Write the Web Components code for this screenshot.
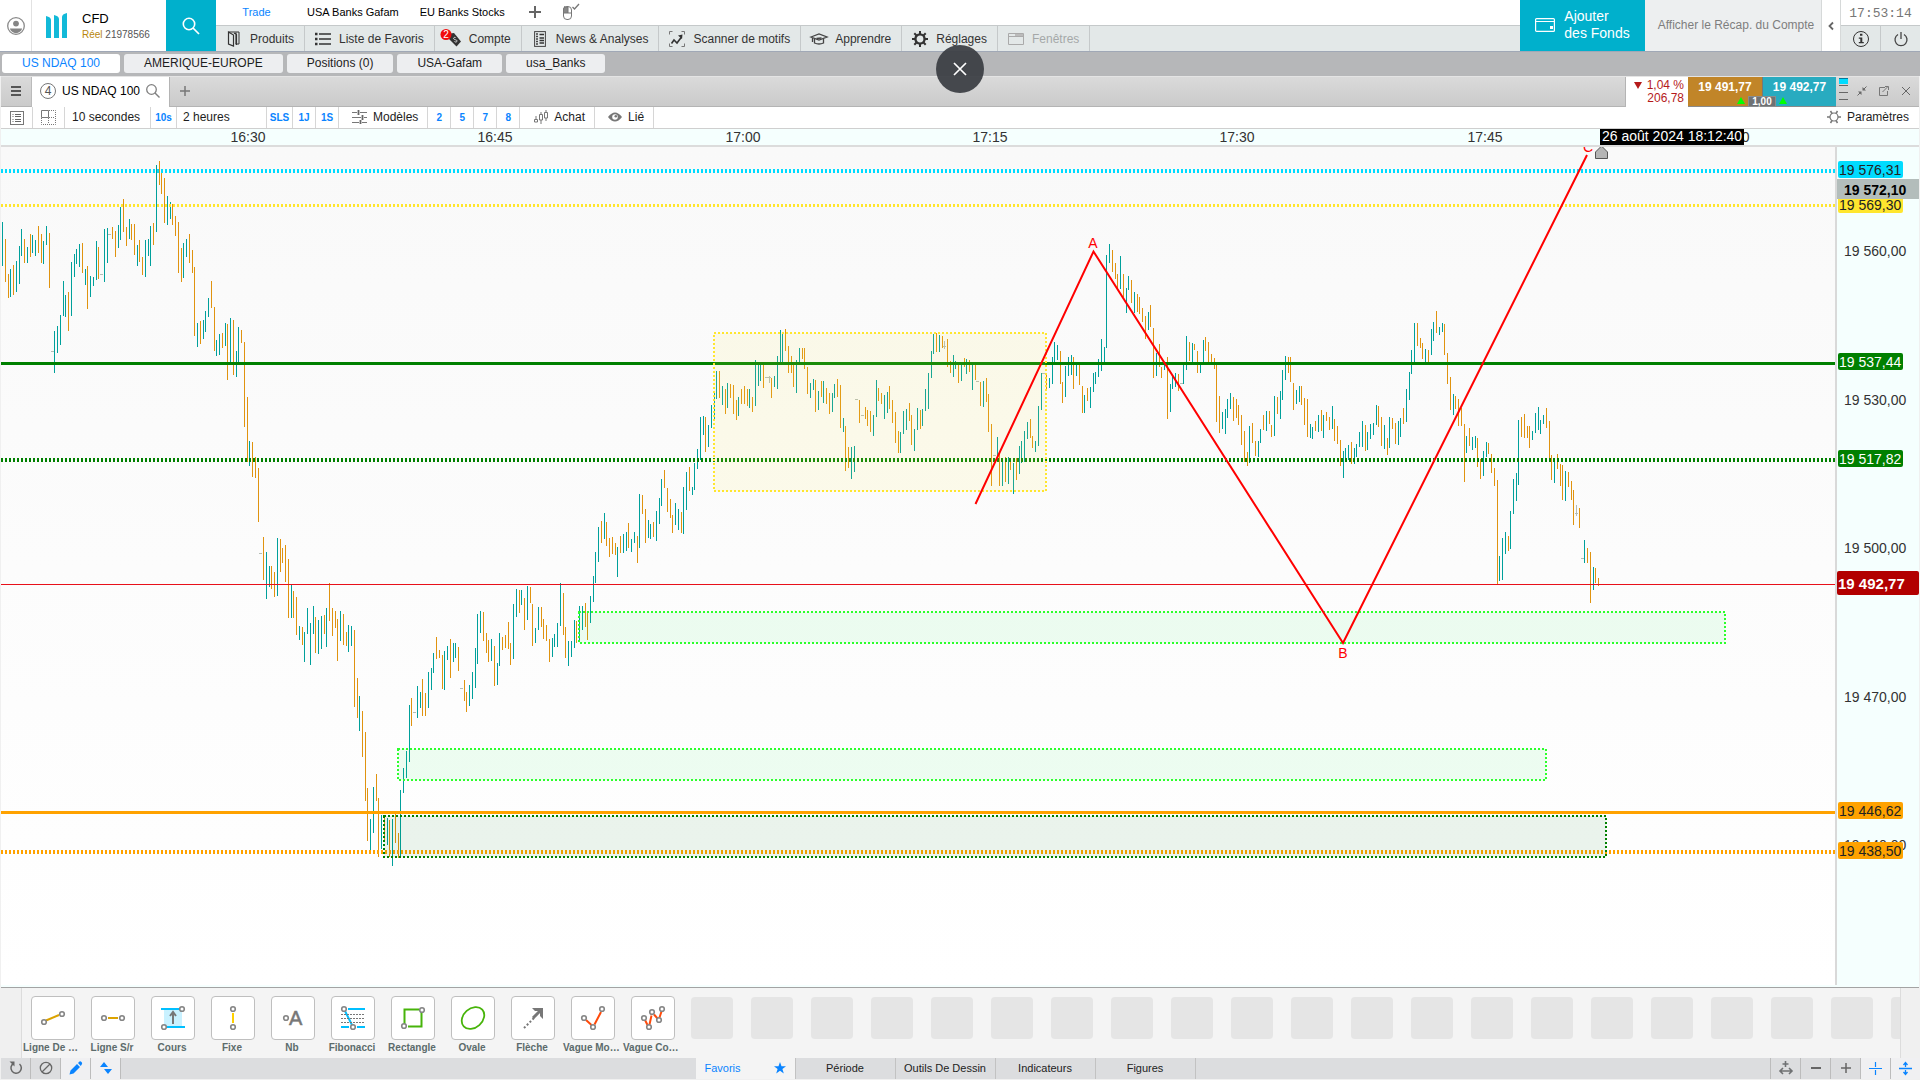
<!DOCTYPE html>
<html lang="fr">
<head>
<meta charset="utf-8">
<title>US NDAQ 100</title>
<style>
	html, body { height: 100%; margin: 0; }
	body {
		background: #f0f0f0;
		color: #1d1d1d;
		font-family: "Liberation Sans", Arial, sans-serif;
		font-size: 12px;
		overflow: hidden;
		--blue: #0a84ff;
		--cyan: #00b0cc;
		--line: #c5c9ca;
	}
</style>
</head>
<body>
<trading-app></trading-app>

<script>
// shared reset for every shadow root
const base = `
	*, *::before, *::after { box-sizing: border-box; }
	:host { display: block; box-sizing: border-box; }
	button {
		font: inherit; color: inherit; background: none; border: 0; margin: 0; padding: 0;
		display: flex; align-items: center; justify-content: center; white-space: nowrap; cursor: pointer;
	}
	a { color: inherit; text-decoration: none; white-space: nowrap; }
`;

function define(tag, css, html) {
	customElements.define(tag, class extends HTMLElement {
		constructor() {
			super();
			this.attachShadow({ mode: "open" });
		}
		connectedCallback() {
			const markup = typeof html == "function" ? html(this) : html;
			this.shadowRoot.innerHTML = `<style>${base}${css}</style>${markup}`;
		}
	});
}

/* ---------- icons ---------- */

const ring = (x, y) => `<circle cx="${x}" cy="${y}" r="2.3" stroke="#858585" stroke-width="1.6"/>`;

// name: [width, height, shapes]
const icons = {
	user: [18, 18, `<circle cx="9" cy="9" r="8.3" stroke="#8a8a8a" stroke-width="1.3"/><circle cx="9" cy="6.6" r="2.9" fill="#858585"/><path d="M2.8 11.6h12.4c-1 2.8-3.2 4.6-6.2 4.6s-5.2-1.8-6.2-4.6z" fill="#858585"/>`],
	logo: [22, 26, `<path d="M0 3q5 1 5 4v18H0zM8 2q5 1 5 4v19H8zM21 0v25h-5V4q0-3 5-4z" fill="#12b9d8"/>`],
	search: [18, 18, `<circle cx="7" cy="7" r="5.7" stroke="currentColor" stroke-width="1.6"/><path d="M11 11l6 6" stroke="currentColor" stroke-width="1.7"/>`],
	find: [14, 14, `<circle cx="5.5" cy="5.5" r="4.8" stroke="#808080" stroke-width="1.3"/><path d="M9 9l4.500 4.500" stroke="#808080" stroke-width="1.400"/>`],
	plus: [12, 12, `<path d="M6 0v12M0 6h12" stroke="currentColor" stroke-width="2"/>`],
	plusSmall: [10, 10, `<path d="M5 0v10M0 5h10" stroke="currentColor" stroke-width="1.5"/>`],
	mouse: [18, 16, `<rect x="1.5" y="2.5" width="8" height="13" rx="3.5" stroke="#777"/><path d="M2 3h4v6H1.5V6Q1.5 3 3 3zM6 9h3" fill="#888" stroke="#777"/><path d="M10.5 3l2 2L17 0" stroke="#777" stroke-width="1.3"/>`],
	book: [16, 16, `<path d="M2.5 1h10.5v12H9.5" stroke="#333"/><path d="M2.5 1l5 3v11l-5-2zM10 1.5V13M8 2l2.5 1.5V14" stroke="#333" stroke-width="1.2"/>`],
	list: [16, 14, `<path d="M4 2h12M4 7h12M4 12h12" stroke="#333" stroke-width="1.7"/><path d="M0 2h2.5M0 7h2.5M0 12h2.5" stroke="#333" stroke-width="2.5"/>`],
	tag: [18, 18, `<path d="M6 3.5l4-.5 7 8.5-4.5 5L5 9z" fill="#333"/><path d="M11.5 7.5c-1-.6-2.5.4-1.7 1.5s3 .5 3.2 1.8-1.5 1.7-2.5.7" stroke="#ddd"/><circle cx="2" cy="4.5" r="5.5" fill="#f10b0b"/><text x="2" y="8" text-anchor="middle" font-size="10" fill="#fff">2</text>`],
	news: [12, 16, `<rect x=".6" y=".6" width="10.8" height="14.8" stroke="#444"/><path d="M2 3h2M2 5.5h2M2 8h2M2 10.5h2M2 13h2" stroke="#444" stroke-width="1.3"/><path d="M5.5 3.5H10M5.5 7H10M5.5 9.5H10M5.5 12H10" stroke="#333" stroke-width="1.5"/>`],
	scanner: [16, 16, `<path d="M.5 3.5v-3h3M12.5.5h3v3M15.5 12.5v3h-3M3.5 15.5h-3v-3" stroke="#777"/><path d="M2.5 12.5L5 9l3 3 4.5-6" stroke="#333" stroke-width="1.6"/><path d="M9 4.5l4.5-1-.5 4.5z" fill="#333"/>`],
	learn: [18, 12, `<path d="M1 4l8-3 8 3-8 3z" stroke="#444" stroke-width="1.3"/><path d="M4.5 6v4q4.500 2 9 0V6M2.5 5v4M6.5 5.5l5-.5" stroke="#444" stroke-width="1.3"/>`],
	gear: [16, 16, `<circle cx="8" cy="8" r="4.6" stroke="#333" stroke-width="2.4"/><path d="M8 0v3M8 13v3M0 8h3M13 8h3M2.300 2.300l2.200 2.200M11.500 11.500l2.200 2.200M13.700 2.300l-2.200 2.200M4.500 11.500l-2.200 2.200" stroke="#333" stroke-width="2"/>`],
	windows: [16, 12, `<path d="M.5.5h15v11H.5zM.5 3.5h15" stroke="#aaa"/><path d="M7 1h8v2H7z" fill="#bbb"/>`],
	wallet: [20, 14, `<rect x=".6" y=".6" width="18.8" height="12.8" rx="1" stroke="#fff" stroke-width="1.2"/><path d="M1 3.5h18" stroke="#fff"/><path d="M15 8h3v3h-3z" fill="#fff"/>`],
	chevron: [6, 8, `<path d="M5 .5L1.5 4 5 7.5" stroke="#666" stroke-width="1.8"/>`],
	info: [18, 18, `<circle cx="9" cy="9" r="7.5" stroke="#333"/><path d="M8 3.8h2.4v2H8zM6.8 7.5h3.5V12h1.5v1.3h-5V12h1.500V8.8H6.8z" fill="#333"/>`],
	power: [14, 16, `<path d="M4 3.5a6 6 0 1 0 6 0" stroke="#444" stroke-width="1.3"/><path d="M7 1v7" stroke="#444" stroke-width="1.3"/>`],
	burger: [10, 10, `<path d="M0 1h10M0 5h10M0 9h10" stroke="#555" stroke-width="2"/>`],
	close: [16, 16, `<path d="M2 2l12 12M14 2L2 14" stroke="#fff" stroke-width="1.7"/>`],
	x: [10, 10, `<path d="M1 1l8 8M9 1L1 9" stroke="#666"/>`],
	popout: [10, 10, `<path d="M6 1.5H.5v8h8V5" stroke="#777"/><path d="M3.5 6l5-5M6 .5h3.5V4" stroke="#777"/>`],
	shrink: [10, 10, `<path d="M9.5.5L6 4M.5 9.5L4 6" stroke="#666"/><path d="M5.5 1v3.5H9zM1 5.5h3.5V9z" fill="#666"/>`],
	ladder: [9, 22, `<path d="M0 .5h9" stroke="#06789a"/><path d="M0 1h9v5H0z" fill="#00dcff"/><path d="M0 7.5h9M0 14.5h9M0 21.5h9" stroke="#666"/>`],
	sheet: [14, 14, `<rect x=".5" y=".5" width="13" height="13" stroke="#777"/><path d="M5 3.5h6M5 5.5h6M5 8.5h6M5 10.5h6M2.5 3.5h1M2.5 5.5h1M2.5 8.5h1M2.5 10.5h1" stroke="#666"/>`],
	cells: [15, 15, `<path d="M.5.5h7v7h-7z" stroke="#777"/><path d="M8 .5h6.5v14H.5V8M7.5 8v6M8 7.5h6" stroke="#777" stroke-dasharray="1 1"/>`],
	models: [15, 14, `<path d="M0 2.5h5M8 2.5h7M0 7.5h9M12 7.5h3M0 12.5h7M10 12.5h5" stroke="#777"/><path d="M6.5 0v5M10.5 5v5M8.5 10v4" stroke="#666" stroke-width="1.8"/>`],
	candles: [15, 14, `<path d="M1.5 9.5h3V12h-3zM3 6v3M6.5 4.5h3V10h-3zM8 2v2M8 10v4M11.5 2.5h3V8h-3zM13 0v2M13 8v3" stroke="#777"/>`],
	eye: [14, 10, `<path d="M0 5q7-9 14 0-7 9-14 0z" fill="#777"/><circle cx="7" cy="5" r="2.8" fill="#fff"/><circle cx="7.8" cy="4.2" r="1.3" fill="#777"/>`],
	cog: [14, 14, `<circle cx="7" cy="7" r="4" stroke="#777" stroke-width="1.2"/><path d="M0 7h3M11 7h3M3.5 1l1.5 2.5M10.5 1L9 3.5M3.5 13L5 10.5M10.5 13L9 10.5" stroke="#777" stroke-width="1.5"/>`],
	reload: [14, 14, `<path d="M4.5 2.5a5.2 5.2 0 1 0 6 .5" stroke="#666" stroke-width="1.5"/><path d="M.5.5h5v5z" fill="#666"/>`],
	ban: [14, 14, `<circle cx="7" cy="7" r="5.7" stroke="#666" stroke-width="1.3"/><path d="M3 11l8-8" stroke="#666" stroke-width="1.3"/>`],
	pencil: [14, 14, `<path d="M.5 13.5l1-4 6.5-6.5 3 3-6.5 6.5zM9 2l1.5-1.5q1-.5 2 .5t.5 2L11.8 5z" fill="#0a84ff"/>`],
	sort: [12, 14, `<path d="M4 1L8 6H0zM8 13l4-5H4z" fill="#0a84ff"/>`],
	star: [12, 12, `<path d="M6 0l1.5 4.3H12L8.4 7 9.8 11.5 6 8.8 2.2 11.5 3.6 7 0 4.3h4.5z" fill="#0a84ff"/>`],
	expand: [14, 14, `<path d="M6.5 0v6M3.5 3h6M1 10h12M4 7l-3 3 3 3M10 7l3 3-3 3" stroke="#6f7173" stroke-width="1.6"/>`],
	minus: [10, 10, `<path d="M0 5h10" stroke="#666" stroke-width="2"/>`],
	cross: [13, 13, `<path d="M6.5 0v5M6.5 8v5M0 6.5h13" stroke="#0a84ff" stroke-width="1.2"/>`],
	split: [13, 13, `<path d="M0 6.5h13M6.5 1v4M6.5 8v4M4.5 3l2-2.5 2 2.5M4.5 10l2 2.5 2-2.5" stroke="#0a84ff" stroke-width="1.3"/>`],

	trend: [42, 42, `<path d="M14 23.5L27 18" stroke="#dca300" stroke-width="2"/>${ring(12, 25)}${ring(30, 17)}`],
	level: [42, 42, `<path d="M16 21h10" stroke="#dca300" stroke-width="2"/>${ring(12, 21)}${ring(30, 21)}`],
	course: [42, 42, `<path d="M12 13h18v16H12z" fill="#c9f1ff"/><path d="M9 12h18M15 30h18" stroke="#00bfff" stroke-width="2"/><path d="M21 27V15M18 19l3-4 3 4" stroke="#777" stroke-width="2"/>${ring(30, 12)}${ring(12, 30)}`],
	fixed: [42, 42, `<path d="M21 16v10" stroke="#ffd000" stroke-width="2"/>${ring(21, 12)}${ring(21, 30)}`],
	note: [42, 42, `${ring(14, 21)}<text x="17" y="28" font-size="20" font-weight="400" fill="#777" stroke="#777" stroke-width=".5">A</text>`],
	fibo: [42, 42, `<path d="M16 12h17M9 30h8M25 30h8M13 14l7 14" stroke="#00bfff" stroke-width="2"/><path d="M9 17.5h24M9 21.5h24M9 25.5h24" stroke="#777" stroke-dasharray="2 1"/>${ring(12, 12)}${ring(21, 30)}`],
	rect: [42, 42, `<path d="M27 12.5H12.5V27M16 29.5h13.5V15" stroke="#47b40a" stroke-width="2"/>${ring(30, 13)}${ring(12, 29)}`],
	oval: [42, 42, `<ellipse cx="21" cy="21" rx="12.5" ry="9.5" transform="rotate(-42 21 21)" stroke="#47b40a" stroke-width="1.8"/>`],
	arrow: [42, 42, `<path d="M12 31l10-10" stroke="#777" stroke-width="2" stroke-dasharray="2 2"/><path d="M21 21l7-7" stroke="#777" stroke-width="3"/><path d="M20 11h11v11l-3-3v-5h-5z" fill="#777"/>`],
	wave: [42, 42, `<path d="M14 23l5.500 5M22.500 27.500L29 15" stroke="#ff4a0a" stroke-width="2"/>${ring(12, 21)}${ring(21, 30)}${ring(30, 12)}`],
	waves: [42, 42, `<path d="M13 23l2.500 5M17.500 27.500l2-9M22 17.500l3.500 4M27.500 20.500l2-6" stroke="#ff4a0a" stroke-width="2"/>${ring(12, 21)}${ring(17, 30)}${ring(20, 15)}${ring(27, 23)}${ring(30, 12)}`]
};

define("ui-icon", `
	:host { display: block; flex: none; }
	svg { display: block; overflow: visible; }
`, el => {
	const [w, h, shapes] = icons[el.getAttribute("name")];
	return `<svg width="${w}" height="${h}" viewBox="0 0 ${w} ${h}" fill="none" aria-hidden="true">${shapes}</svg>`;
});

/* ---------- top bar ---------- */

define("nav-item", `
	:host { border-right: 1px solid var(--line); color: #333; }
	:host([disabled]) { color: #a5a8a8; }
	button { height: 100%; padding: 0 10px 0 9px; gap: 7px; }
	.glyph { width: 18px; display: flex; justify-content: center; }
`, el => `
	<button ${el.hasAttribute("disabled") ? "disabled" : ""}>
		<span class="glyph"><ui-icon name="${el.getAttribute("icon")}"></ui-icon></span><slot></slot>
	</button>
`);

define("top-bar", `
	:host { display: flex; height: 51px; background: #fff; flex: none; }
	.user { width: 32px; border-right: 1px solid #e2e2e2; }
	.account { width: 134px; padding-left: 14px; display: flex; align-items: center; gap: 14px; }
	.account b { display: block; font-weight: normal; font-size: 13px; line-height: 16px; padding-top: 1px; color: #000; }
	.account small { display: block; font-size: 10px; line-height: 15px; color: #555; }
	.account small span { color: #b8860b; }
	.search { width: 50px; background: var(--cyan); color: #fff; }
	.middle { flex: 1; min-width: 0; display: flex; flex-direction: column; }
	.views { height: 25px; display: flex; align-items: center; font-size: 11px; color: #000; padding-bottom: 2px; }
	.views a { padding: 0 10px; text-align: center; }
	.views a.on { width: 81px; color: var(--blue); }
	.views a:last-of-type { margin: 0 2px 0 1px; }
	.views button { color: #666; width: 36px; }
	nav { height: 26px; display: flex; background: #e3e8e8; border-top: 1px solid var(--line); }
	.funds { width: 125px; padding-bottom: 1px; background: var(--cyan); color: #fff; font-size: 14px; line-height: 17px; gap: 9px; text-align: left; }
	.recap { width: 176px; padding: 0 0 2px 6px; background: #edeff0; color: #7e7e7e; }
	.fold { width: 20px; border: 1px solid #d6d9d9; border-width: 0 1px; }
	.system { width: 79px; display: flex; flex-direction: column; }
	time { height: 25px; line-height: 27px; text-align: center; font-family: "Liberation Mono", monospace; font-size: 13px; color: #777; }
	.system div { display: flex; flex: 1; background: #e3e8e8; border-top: 1px solid var(--line); }
	.system button { flex: 1; }
	.system button + button { border-left: 1px solid var(--line); }
`, `
	<button class="user" aria-label="Profil"><ui-icon name="user"></ui-icon></button>
	<div class="account">
		<ui-icon name="logo"></ui-icon>
		<div><b>CFD</b><small><span>Réel</span> 21978566</small></div>
	</div>
	<button class="search" aria-label="Rechercher"><ui-icon name="search"></ui-icon></button>
	<div class="middle">
		<div class="views">
			<a class="on" href="#">Trade</a><a href="#">USA Banks Gafam</a><a href="#">EU Banks Stocks</a>
			<button aria-label="Ajouter"><ui-icon name="plus"></ui-icon></button>
			<button aria-label="Souris"><ui-icon name="mouse"></ui-icon></button>
		</div>
		<nav>
			<nav-item icon="book">Produits</nav-item>
			<nav-item icon="list">Liste de Favoris</nav-item>
			<nav-item icon="tag">Compte</nav-item>
			<nav-item icon="news">News &amp; Analyses</nav-item>
			<nav-item icon="scanner">Scanner de motifs</nav-item>
			<nav-item icon="learn">Apprendre</nav-item>
			<nav-item icon="gear">Réglages</nav-item>
			<nav-item icon="windows" disabled>Fenêtres</nav-item>
		</nav>
	</div>
	<button class="funds"><ui-icon name="wallet"></ui-icon><span>Ajouter<br>des Fonds</span></button>
	<button class="recap">Afficher le Récap. du Compte</button>
	<button class="fold" aria-label="Replier"><ui-icon name="chevron"></ui-icon></button>
	<div class="system">
		<time>17:53:14</time>
		<div>
			<button aria-label="Info"><ui-icon name="info"></ui-icon></button>
			<button aria-label="Quitter"><ui-icon name="power"></ui-icon></button>
		</div>
	</div>
`);

define("workspace-tabs", `
	:host { display: flex; gap: 4px; height: 25px; flex: none; padding: 2px 2px 3px; background: #b6b7b9; border-top: 1px solid #a0a8b6; }
	button { height: 19px; padding: 0 20px 2px; border-radius: 3px; background: #edeef0; color: #1d1d1d; }
	button.on { background: #fff; color: var(--blue); }
`, `
	<button class="on">US NDAQ 100</button>
	<button>AMERIQUE-EUROPE</button>
	<button>Positions (0)</button>
	<button>USA-Gafam</button>
	<button>usa_Banks</button>
`);

/* ---------- instrument panel ---------- */

define("panel-header", `
	:host {
		display: flex; height: 31px; flex: none; margin: 0 1px;
		background: linear-gradient(#dadada, #cacaca); border-top: 1px solid #e4e4e4;
	}
	.menu { width: 31px; padding-bottom: 1px; border-right: 1px solid #bbb; border-bottom: 1px solid #b4b4b4; }
	.tab { display: flex; align-items: center; gap: 6px; width: 137px; padding: 0 0 2px 8px; background: #fff; color: #000; white-space: nowrap; }
	.tab i { width: 16px; height: 16px; border: 1px solid #777; border-radius: 50%; font-style: normal; line-height: 14px; text-align: center; color: #555; }
	.rest { flex: 1; display: flex; border: 1px solid #b4b4b4; border-width: 0 1px 1px; }
	.rest button { width: 30px; padding-bottom: 1px; color: #777; }
	.change { width: 62px; background: #fff; color: #b51a1a; text-align: right; line-height: 13px; padding: 2px 4px 0 0; }
	.change i { display: inline-block; border: 4px solid transparent; border-top: 7px solid #b51a1a; border-bottom: 0; margin-right: 5px; }
	.quote { position: relative; display: flex; color: #fff; font-weight: bold; }
	.quote > button { width: 74px; padding-bottom: 10px; border-bottom: 1px solid #8a8a8a; background: #c18528; }
	.quote > button + button { background: #28abc0; border-left: 1px solid #777; }
	.lot { position: absolute; left: 50%; bottom: 0; width: 28px; margin-left: -14px; background: #6f7274; border: 1px solid #8a8c8e; font-size: 10px; line-height: 9px; text-align: center; }
	.lot::before, .lot::after { content: ""; position: absolute; top: 0; border: 4px solid transparent; border-bottom: 7px solid #0f0; border-top: 0; }
	.lot::before { right: 30px; }
	.lot::after { left: 30px; }
	.tools { display: flex; align-items: center; gap: 12px; width: 83px; padding: 0 0 2px 3px; border-bottom: 1px solid #b4b4b4; }
	.tools > ui-icon { margin: 0 -3px 4px 0; }
`, `
	<button class="menu" aria-label="Menu"><ui-icon name="burger"></ui-icon></button>
	<div class="tab"><i>4</i>US NDAQ 100<ui-icon name="find"></ui-icon></div>
	<div class="rest"><button aria-label="Nouvel onglet"><ui-icon name="plusSmall"></ui-icon></button></div>
	<div class="change"><i></i>1,04 %<br>206,78</div>
	<div class="quote">
		<button>19 491,77</button><button>19 492,77</button>
		<span class="lot">1,00</span>
	</div>
	<div class="tools">
		<ui-icon name="ladder"></ui-icon>
		<button aria-label="Réduire"><ui-icon name="shrink"></ui-icon></button>
		<button aria-label="Détacher"><ui-icon name="popout"></ui-icon></button>
		<button aria-label="Fermer"><ui-icon name="x"></ui-icon></button>
	</div>
`);

define("chart-toolbar", `
	:host { display: flex; height: 22px; flex: none; margin: 0 1px; background: #fff; border-bottom: 1px solid #cfcfcf; }
	button { border-right: 1px solid #d6d6d6; gap: 6px; min-width: 23px; padding-bottom: 1px; }
	.icon { width: 32px; padding: 0; }
	.text { justify-content: flex-start; padding-left: 7px; width: 86px; }
	.key + .text { width: 90px; padding-left: 6px; }
	.key { color: var(--blue); font-weight: bold; font-size: 10px; padding-top: 1px; }
	.wide { width: 26px; }
	.group { padding-left: 13px; padding-right: 9px; }
	.params { margin-left: auto; border: 0; padding-right: 10px; }
`, `
	<button class="icon" aria-label="Liste"><ui-icon name="sheet"></ui-icon></button>
	<button class="icon" aria-label="Grille"><ui-icon name="cells"></ui-icon></button>
	<button class="text">10 secondes</button>
	<button class="key wide">10s</button>
	<button class="text">2 heures</button>
	<button class="key wide">SLS</button>
	<button class="key">1J</button>
	<button class="key">1S</button>
	<button class="group"><ui-icon name="models"></ui-icon>Modèles</button>
	<button class="key">2</button>
	<button class="key">5</button>
	<button class="key">7</button>
	<button class="key">8</button>
	<button class="group"><ui-icon name="candles"></ui-icon>Achat</button>
	<button class="group"><ui-icon name="eye"></ui-icon>Lié</button>
	<button class="params"><ui-icon name="cog"></ui-icon>Paramètres</button>
`);

/* ---------- chart ---------- */

// 10 second bars, in blocks: u = up, d = down, n = unchanged.
// Each entry is "x top bottom", scaled by kx and 3 from the block's origin.
const blocks = [
	{ left: -1, top: -7, kx: 3, bars: `u7 246 378;d16 297 426;d25 402 474;u31 387 471;d40 375 465;u49 363 456;u58 318 432;u64 267 348;d73 297 369;u82 321 369;d91 282 351;u97 285 339;u106 300 348;d115 258 339;d124 282 369;u130 303 372;u139 258 315;d148 279 444;n157 634;u163 573 699;u172 558 639;u181 525 615;u190 423 528;u196 465 531;d205 456 573;u214 366 528;u223 342 411;u229 327 372;u238 312 381;d247 309 399;u256 387 435;d262 378 507;u271 408 471;u280 411 438;u289 303 420;d295 321 417;n304 403;u313 267 426;u322 264 369;n328 283;d337 261 297;d346 273 351;u355 255 324;u361 201 300;d370 177 276;d379 261 318;u388 237 297;d394 252 300;d403 252 345;u412 315 378;d418 300 366;d427 351 405;u436 300 411;u445 297 348;u451 258 378;d460 249 315;u469 75 276;d478 63 135;d484 98 162;d493 114 249;u502 168 255;u511 186 237;d517 192 255;d526 228 288;d535 246 399;d544 324 426;u550 309 414;u559 297 351;d568 282 369;d577 330 399;d583 381 588;u592 549 621;d601 543 612;u610 540 597;u616 513 576;u625 474 531;d634 423 504;d643 501 633;u649 600 648;u658 582 645;d667 579 624;u676 549 618;d682 552 720;u691 534 666;d700 540 705;u709 633 711;u715 561 669;d724 570 609;d733 606 861;d742 771 966;u748 903 978;d757 906 1011;d766 951 1014;d775 984 1146` },
	{ left: 219, top: 353, kx: 3, bars: `n121 160;d130 111 240;u139 156 297;u148 198 261;d154 198 267;d163 216 291;u172 114 288;d181 117 216;d187 144 189;d196 135 246;d205 177 354;u214 252 354;d220 273 354;d229 291 405;u238 378 420;d247 381 435;u253 396 486;u262 324 402;u271 369 495;u280 318 402;d286 351 459;u295 360 462;u304 348 447;d313 345 402;u319 324 441;d328 249 363;d337 324 408;d346 333 384;d352 357 483;u361 333 423;d370 342 435;d379 396 438;u385 375 456;u394 378 438;d403 390 621;d412 534 654;u418 588 693;d427 633 771;d436 696 903;d442 864 1023;u451 957 1053;u460 861 999;d469 822 903;d475 894 1071;u484 945 1047;d493 945 1023;u502 954 1035;d508 960 1071;u517 957 1098;d526 939 1029;d535 999 1074;u541 870 1074;u550 804 879;u559 753 834;u568 615 786;d574 594 678;n583 637;u592 558 654;u601 576 624;d607 537 648;d616 579 648;u625 516 624;u634 504 570;u640 459 519;d649 411 477;d658 450 474;d667 465 567;u673 453 570;u682 438 480;d691 417 534;u700 429 486;u706 429 474;d715 441 513;n724 565;d733 540 603;d739 576 636;u748 555 618;u757 516 597;u766 444 564;u772 342 492;u781 333 399;d790 336 423;d799 399 459;d805 420 486;u814 417 483;d823 438 558;u832 489 555;u838 399 498;d847 411 450;d856 405 444;d865 366 447;d871 429 495;u880 312 477;u889 267 351;d898 270 339;u904 270 315;d913 294 390;u922 258 360;d931 261 309;d937 312 438;u946 384 429;u955 321 390;d964 321 381;d970 357 417;d979 375 423;d988 417 486;u997 414 471;u1003 402 441;u1012 369 441;u1021 249 378;d1030 279 405;d1036 381 474;u1045 423 498;u1054 423 471;u1063 360 444;d1069 363 429;u1078 318 423;u1087 318 390;d1096 309 381;d1102 336 420;u1111 288 369;u1120 228 306;u1126 156 249;u1135 81 186;d1144 63 129;u1153 39 117;d1159 66 138;d1168 114 171;d1177 111 162;d1186 129 165;u1192 141 231;d1201 108 159;u1210 102 159;u1219 96 153;d1225 69 144;u1234 117 156;u1243 96 129;d1252 108 189` },
	{ left: 539, top: 153, kx: 2.904, bars: `u288 582 744;d297 585 642;d306 627 729;u315 660 714;u320 672 717;d329 666 711;u338 633 723;u347 594 672;u352 537 618;d361 510 564;d370 564 636;d378 597 654;d384 645 699;u393 609 675;u402 627 690;d410 636 699;u416 561 702;u425 516 630;d434 501 573;u442 561 585;u448 489 570;u457 447 507;u466 351 480;u474 348 405;d480 351 456;u489 375 441;u498 315 384;u506 279 357;u512 213 297;d521 213 294;u529 258 315;d538 267 342;u544 249 324;d553 252 294;d561 255 342;d570 300 360;u576 291 348;d585 267 312;d593 258 312;d602 267 318;u608 267 324;d617 291 336;u625 180 318;u634 195 258;u640 195 243;d649 195 264;n658 232;n666 232 228 249;d672 234 294;u680 228 261;u689 168 267;u698 90 192;u704 102 186;d712 87 153;d721 138 219;d730 168 219;d736 192 261;u744 180 279;u753 144 186;d762 144 177;d768 144 207;d776 201 282;u785 249 294;u794 237 270;d800 240 336;u808 273 330;d817 243 291;u823 243 309;d831 264 312;d840 279 342;u849 279 336;u855 252 294;d863 237 291;d872 255 384;u881 354 396;d887 378 513;d895 441 504;u904 441 537;u913 438 516;n918 298;d927 300 369;n936 346;d945 321 357;d951 330 378;d959 333 396;u968 345 408;u977 240 351;d982 264 303;d991 279 312;u1000 285 357;u1009 276 339;d1014 258 327;d1023 300 369;d1032 336 429;d1041 393 459;u1046 396 459;u1055 333 402;u1064 327 390;d1072 309 363;d1078 345 435;u1087 387 453;u1096 324 390;d1104 330 387;u1110 327 378;u1119 267 333;u1128 219 327;u1136 153 234;u1142 102 162;d1151 99 156;u1160 105 156;d1168 108 144;n1174 139 123 147;d1183 117 201;d1192 183 219;u1200 165 231;u1206 183 207;d1215 195 249;u1223 195 243;d1232 174 201;u1238 177 222;d1247 180 216;u1255 195 270;d1264 195 240;n1270 244;d1279 246 318;u1287 243 321;d1296 234 306;d1302 282 396;d1311 372 558;n1320 466;u1328 411 471;d1334 456 558;u1343 480 558;d1351 471 546;u1360 471 552;d1366 474 510;u1374 489 582;d1383 474 540;u1392 438 522;u1398 423 489;u1406 393 486;u1415 366 417;d1424 357 414;d1430 408 444;u1438 423 456;u1447 318 438;u1456 219 330;n1462 220;d1470 219 267` },
	{ left: 959, top: 73, kx: 3, bars: `u268 474 504;u277 411 492;u283 366 433;u292 375 420;d301 393 492;d307 486 549;u316 438 531;u325 411 468;u334 405 465;d340 411 507;u349 432 468;d358 432 495;d367 498 579;u373 525 579;d382 504 543;u391 501 564;u400 459 516;u406 456 492;u415 417 471;u424 357 453;u433 381 432;u439 105 384;u448 72 129;d457 90 156;d466 129 177;d472 162 204;u481 108 207;d490 162 231;u499 204 279;u505 168 210;d514 180 249;u523 216 279;d532 222 276;d538 231 282;d547 264 306;d556 288 357;u565 276 330;d571 255 321;d580 324 474;u589 399 468;d598 372 441;d604 441 474;u613 432 450;d622 411 597;u631 492 576;u637 465 507;u646 459 501;d655 462 513;n664 490;u670 432 492;u679 348 450;d688 366 423;u697 369 432;d703 372 390;d712 393 459;u721 432 459;u730 360 432;d736 351 393;d745 366 426;d754 402 432;d763 414 447;d769 432 606;d778 528 639;u787 576 627;u796 567 642;u802 537 594;u811 519 567;d820 531 603;d829 537 594;d835 555 615;d844 585 675;d853 633 726;d862 696 738;u868 618 729;d877 609 669;d886 663 708;u895 663 711;u901 627 669;d910 585 630;u919 573 633;d928 573 612;d934 615 651;u943 528 648;d952 531 582;u961 513 597;u967 450 540;u976 408 480;d985 411 459;d991 411 486;d1000 489 570;u1009 510 552;u1018 498 546;d1024 498 555;d1033 534 615;d1042 537 651;u1051 612 654;u1057 621 657;d1066 603 633;u1075 585 636;d1084 570 633;u1090 585 654;d1099 576 603;d1108 591 630;u1117 558 627;d1123 597 663;d1132 618 672;d1141 660 738;u1150 693 774;u1156 684 726;u1165 675 720;d1174 666 732;u1183 684 732;u1189 672 711;u1198 636 681;u1207 603 681;d1216 615 693;u1222 636 690;u1231 612 657;u1240 609 645;u1249 555 615;d1255 558 621;d1264 591 678;u1273 615 687;d1282 654 705;u1288 591 684;d1297 594 627;d1306 609 672;u1315 603 675;u1321 594 651;d1330 564 612;u1339 507 606;u1348 456 540;u1354 390 462;u1363 309 426;d1372 309 378;d1381 354 384;d1387 369 417;u1396 387 426;d1405 390 426;u1414 327 405;u1420 306 363;d1429 273 339` },
	{ left: 1299, top: 133, kx: 2.529, bars: `u353 141 165;u361 129 156;d365 132 225;d373 219 312;d380 291 390;u388 342 405;d393 348 387;d401 357 438;d408 384 438;d416 432 606;u421 468 519;d428 444 498;u436 471 510;u444 468 504;d449 474 561;d456 537 597;u464 513 588;u471 486 531;d477 489 522;d484 522 579;d492 564 618;d499 600 912;u504 828 903;u512 774 900;u519 756 822;d527 768 813;u532 693 807;u540 597 702;u547 579 663;u552 420 615;d560 411 471;d568 402 474;d575 438 474;d580 438 504;u588 453 480;u595 399 459;u603 381 450;u608 420 462;u616 405 432;d623 384 444;d631 423 540;d636 525 600;u643 534 609;d651 522 567;d659 552 618;d664 555 660;u671 573 663;d679 576 621;d687 603 660;d691 630 735;n699 700 675 708;d707 684 744;n715 835;u719 780 849;d727 804 849;d734 816 969;u742 861 930;d747 864 909;d755 894 918` }
];

const barColors = { u: "#00a09b", d: "#e0930f", n: "#b5bdb5" };

function drawBars() {
	const paths = { u: "", d: "", n: "" };
	for (const block of blocks) {
		for (const entry of block.bars.split(";")) {
			const kind = entry[0];
			const [bx, a, b, c] = entry.slice(1).split(" ").map(Number);
			const x = block.left + Math.floor(bx / block.kx);
			const y = v => block.top + Math.round(v / 3);
			if (kind == "n") {
				paths.n += `M${x - 1} ${y(a - 1)}h3v1h-3z`;
				if (c) paths.n += `M${x} ${y(b)}h1V${y(c)}h-1z`;
			} else {
				paths[kind] += `M${x} ${y(a)}h1V${y(b)}h-1z`;
			}
		}
	}
	return Object.keys(paths).map(k => `<path d="${paths[k]}" fill="${barColors[k]}" shape-rendering="crispEdges"/>`).join("");
}

const level = (y, color, width, dotted) =>
	`<line x1="0" x2="100%" y1="${y}" y2="${y}" stroke="${color}" stroke-width="${width}" ${dotted ? 'stroke-dasharray="2 2"' : ""}/>`;

const zone = (x, y, right, bottom, color, fill) =>
	`<rect x="${x + 1}" y="${y + 1}" width="${right - x - 2}" height="${bottom - y - 2}" fill="${fill}" stroke="${color}" stroke-width="2" stroke-dasharray="2 2"/>`;

const times = ["16:30", "16:45", "17:00", "17:15", "17:30", "17:45", "18:00"];

// [price, middle of the label, class]
const prices = [
	["19 560,00", 104, ""], ["19 530,00", 253, ""], ["19 500,00", 401, ""], ["19 470,00", 550, ""], ["19 440,00", 698, ""],
	["19 576,31", 22, "tag cyan"], ["19 569,30", 57, "tag yellow"], ["19 537,44", 214, "tag green"], ["19 517,82", 311, "tag green"],
	["19 446,62", 663, "tag orange"], ["19 438,50", 703, "tag orange"],
	["19 572,10", 42, "cursor"], ["19 492,77", 436, "last"]
];

define("price-chart", `
	:host {
		flex: 1; min-height: 0; margin: 0 1px; padding-bottom: 2px; background: #f5fffe;
		display: grid; grid-template: 18px minmax(0, 1fr) / minmax(0, 1fr) 84px; font-size: 14px;
	}
	svg { display: block; width: 100%; height: 100%; }
	.times { grid-column: 1 / 3; position: relative; border-bottom: 2px solid #dcdcdc; }
	.times svg { fill: #333; }
	.date { position: absolute; left: 1599px; top: 0; height: 16px; line-height: 15px; padding: 0 2px; background: #000; color: #fff; white-space: nowrap; }
	.plot { background: linear-gradient(#f9f9f9, #fff); min-height: 0; }
	.scale { position: relative; border-left: 2px solid #d9d9d9; overflow: hidden; }
	.scale span { position: absolute; left: 7px; height: 18px; margin-top: -9px; line-height: 18px; color: #333; white-space: nowrap; }
	.scale .tag { left: 1px; width: 65px; height: 17px; margin-top: -8px; padding-left: 1px; line-height: 19px; border-radius: 2px; color: #222; }
	.scale .cyan { background: #00dcff; }
	.scale .yellow { background: #ffe62e; }
	.scale .orange { background: #ffa200; }
	.scale .green { background: #008000; color: #fff; }
	.scale .cursor { left: 0; right: 0; height: 20px; margin-top: -10px; line-height: 22px; padding-left: 7px; background: #b3bdbb; color: #000; font-weight: bold; }
	.scale .last { left: 0; right: 0; height: 24px; margin-top: -12px; line-height: 25px; padding-left: 1px; border-radius: 2px; background: #b20000; color: #fff; font-size: 15px; font-weight: bold; }
`, `
	<div class="times">
		<svg>${times.map((t, i) => `<text x="${Math.round(247 + i * 247.3)}" y="13" text-anchor="middle">${t}</text>`).join("")}</svg>
		<span class="date">26 août 2024 18:12:40</span>
	</div>
	<div class="plot">
		<svg fill="none">
			${drawBars()}
			${level(24, "#00dcff", 4, true)}
			${level(58.5, "#ffe62e", 3, true)}
			${level(216.5, "#008000", 3)}
			${level(313, "#008000", 4, true)}
			${level(437.5, "#e8101a", 1)}
			${level(665.5, "#ffa200", 3)}
			${level(705, "#ffa200", 4, true)}
			${zone(712, 185, 1046, 345, "#ffe62e", "rgba(255,240,80,.1)")}
			${zone(577, 464, 1725, 497, "#2cff2c", "rgba(44,240,90,.08)")}
			${zone(396, 601, 1546, 634, "#2cff2c", "rgba(44,240,90,.08)")}
			${zone(382, 668, 1606, 711, "#008000", "rgba(0,110,20,.08)")}
			<polyline points="974.5,357 1092.5,104.5 1342,496 1586,8" stroke="#f00" stroke-width="2"/>
			<g fill="#f00" text-anchor="middle">
				<text x="1092" y="101">A</text><text x="1342" y="511">B</text><text x="1587" y="5">C</text>
			</g>
			<path d="M1600.5-1l6 6v6.5h-12V5z" fill="#b5b5b5" stroke="#555"/>
		</svg>
	</div>
	<div class="scale">${prices.map(([text, y, cls]) => `<span class="${cls}" style="top:${y}px">${text}</span>`).join("")}</div>
`);

/* ---------- drawing tools ---------- */

define("draw-tool", `
	:host { width: 60px; flex: none; }
	button { flex-direction: column; width: 100%; gap: 2px; font-size: 10px; line-height: 12px; font-weight: bold; color: #5c6b6b; }
	i { display: block; width: 44px; height: 44px; border: 1px solid #bfbfbf; border-radius: 4px; background: #fff; font-style: normal; }
	span { padding-right: 2px; }
	:host([cut]) span { align-self: flex-start; }
	:host([empty]) i { width: 42px; height: 42px; border: 0; margin: 1px 8px; background: #e5e5e5; }
`, el => el.hasAttribute("empty")
	? `<i></i>`
	: `<button><i><ui-icon name="${el.getAttribute("icon")}"></ui-icon></i><span><slot></slot></span></button>`);

define("draw-tray", `
	:host { display: flex; height: 71px; flex: none; margin: 0 1px; background: #f0f0f0; border-top: 1px solid #a3a3a3; }
	.row { flex: 1; display: flex; overflow: hidden; min-width: 0; margin: 0 18px 0 20px; padding: 8px 0 0 1px; background: #f4f4f4; border: 1px solid #dcdcdc; border-width: 0 1px; }
`, `
	<div class="row">
		<draw-tool icon="trend" cut>Ligne De …</draw-tool>
		<draw-tool icon="level">Ligne S/r</draw-tool>
		<draw-tool icon="course">Cours</draw-tool>
		<draw-tool icon="fixed">Fixe</draw-tool>
		<draw-tool icon="note">Nb</draw-tool>
		<draw-tool icon="fibo">Fibonacci</draw-tool>
		<draw-tool icon="rect">Rectangle</draw-tool>
		<draw-tool icon="oval">Ovale</draw-tool>
		<draw-tool icon="arrow">Flèche</draw-tool>
		<draw-tool icon="wave" cut>Vague Mo…</draw-tool>
		<draw-tool icon="waves" cut>Vague Co…</draw-tool>
		${"<draw-tool empty></draw-tool>".repeat(21)}
	</div>
`);

define("bottom-bar", `
	:host { display: flex; height: 21px; flex: none; margin: 0 0 1px 1px; background: #dcdddf; font-size: 11px; color: #222; }
	button { width: 30px; padding-bottom: 1px; border-right: 1px solid #bcbcbc; }
	.on { background: #f0f0f2; }
	.space { flex: 1; }
	.tab { width: 100px; border-color: #c2c2c2; }
	.tab.on { color: var(--blue); justify-content: space-between; padding: 0 9px 1px; background: #f4f4f4; }
	.tools { display: flex; color: #666; border-left: 1px solid #bcbcbc; }
	.tools button:last-child { border: 0; width: 29px; }
`, `
	<button aria-label="Annuler"><ui-icon name="reload"></ui-icon></button>
	<button aria-label="Effacer"><ui-icon name="ban"></ui-icon></button>
	<button class="on" aria-label="Dessiner"><ui-icon name="pencil"></ui-icon></button>
	<button class="on" aria-label="Trier"><ui-icon name="sort"></ui-icon></button>
	<span class="space"></span>
	<button class="tab on">Favoris<ui-icon name="star"></ui-icon></button>
	<button class="tab">Période</button>
	<button class="tab">Outils De Dessin</button>
	<button class="tab">Indicateurs</button>
	<button class="tab">Figures</button>
	<span class="space"></span>
	<div class="tools">
		<button aria-label="Ajuster"><ui-icon name="expand"></ui-icon></button>
		<button aria-label="Zoom arrière"><ui-icon name="minus"></ui-icon></button>
		<button aria-label="Zoom avant"><ui-icon name="plusSmall"></ui-icon></button>
		<button class="on" aria-label="Curseur"><ui-icon name="cross"></ui-icon></button>
		<button class="on" aria-label="Séparer"><ui-icon name="split"></ui-icon></button>
	</div>
`);

define("trading-app", `
	:host { display: flex; flex-direction: column; height: 100vh; position: relative; }
	.close { position: absolute; left: 50%; top: 45px; width: 48px; height: 48px; margin-left: -24px; border-radius: 50%; background: rgba(60, 63, 68, .94); }
`, `
	<top-bar></top-bar>
	<workspace-tabs></workspace-tabs>
	<panel-header></panel-header>
	<chart-toolbar></chart-toolbar>
	<price-chart></price-chart>
	<draw-tray></draw-tray>
	<bottom-bar></bottom-bar>
	<button class="close" aria-label="Fermer"><ui-icon name="close"></ui-icon></button>
`);
</script>
</body>
</html>
